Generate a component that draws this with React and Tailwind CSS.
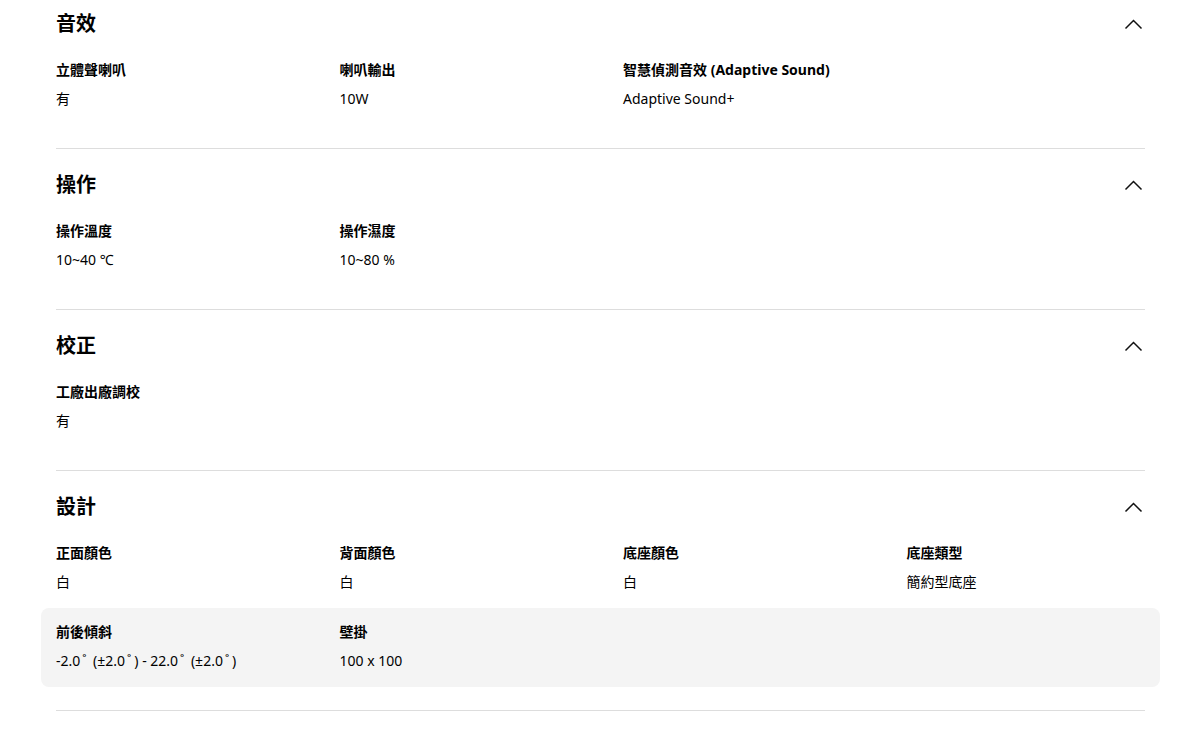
const sections = [
  {
    title: '音效',
    rows: [
      [
        { label: '立體聲喇叭', value: '有' },
        { label: '喇叭輸出', value: '10W' },
        { label: '智慧偵測音效 (Adaptive Sound)', value: 'Adaptive Sound+' },
      ],
    ],
  },
  {
    title: '操作',
    rows: [
      [
        { label: '操作溫度', value: '10~40 ℃' },
        { label: '操作濕度', value: '10~80 %' },
      ],
    ],
  },
  {
    title: '校正',
    rows: [[{ label: '工廠出廠調校', value: '有' }]],
  },
  {
    title: '設計',
    rows: [
      [
        { label: '正面顏色', value: '白' },
        { label: '背面顏色', value: '白' },
        { label: '底座顏色', value: '白' },
        { label: '底座類型', value: '簡約型底座' },
      ],
      [
        { label: '前後傾斜', value: '-2.0˚ (±2.0˚) - 22.0˚ (±2.0˚)' },
        { label: '壁掛', value: '100 x 100' },
      ],
    ],
  },
];

const ChevronUp = () => (
  <svg width="24" height="24" viewBox="0 0 24 24" fill="none" className="shrink-0">
    <path d="M4.5 16.5L12.5 8.5L20.5 16.5" stroke="#111" strokeWidth="1.5" />
  </svg>
);

// the degree ring sits with a little air on both sides in the source font
const Value = ({ text }) =>
  text.split('˚').map((part, i, arr) => (
    <span key={i}>
      {part}
      {i < arr.length - 1 && <span className="ml-[2px] mr-[3px]">˚</span>}
    </span>
  ));

const SpecRow = ({ items, shaded }) => (
  <div
    className={
      'grid grid-cols-4 gap-x-[45px] -mx-[15px] px-[15px] pt-[14px] pb-4 rounded-lg ' +
      (shaded ? 'bg-[#f4f4f4]' : '')
    }
  >
    {items.map((it) => (
      <div key={it.label} className="flex flex-col">
        <span className="text-sm leading-5 font-bold text-black whitespace-nowrap">{it.label}</span>
        <span className="mt-[9px] text-sm leading-5 text-black whitespace-nowrap">
          <Value text={it.value} />
        </span>
      </div>
    ))}
  </div>
);

const SpecSection = ({ section, first }) => (
  <section className={'border-b border-[#dddddd] pb-[23px] ' + (first ? 'pt-[10px]' : 'pt-[22px]')}>
    <div className="flex items-center justify-between">
      <h2 className="text-xl leading-7 font-bold text-black">{section.title}</h2>
      <ChevronUp />
    </div>
    <div className="mt-2 flex flex-col">
      {section.rows.map((row, i) => (
        <SpecRow key={i} items={row} shaded={i % 2 === 1} />
      ))}
    </div>
  </section>
);

export default function App() {
  return (
    <div
      className="min-h-screen bg-white"
      style={{ fontFamily: '"Noto Sans", "Noto Sans CJK TC", sans-serif' }}
    >
      <div className="ml-[56px] w-[1089px]">
        {sections.map((s, i) => (
          <SpecSection key={s.title} section={s} first={i === 0} />
        ))}
      </div>
    </div>
  );
}
